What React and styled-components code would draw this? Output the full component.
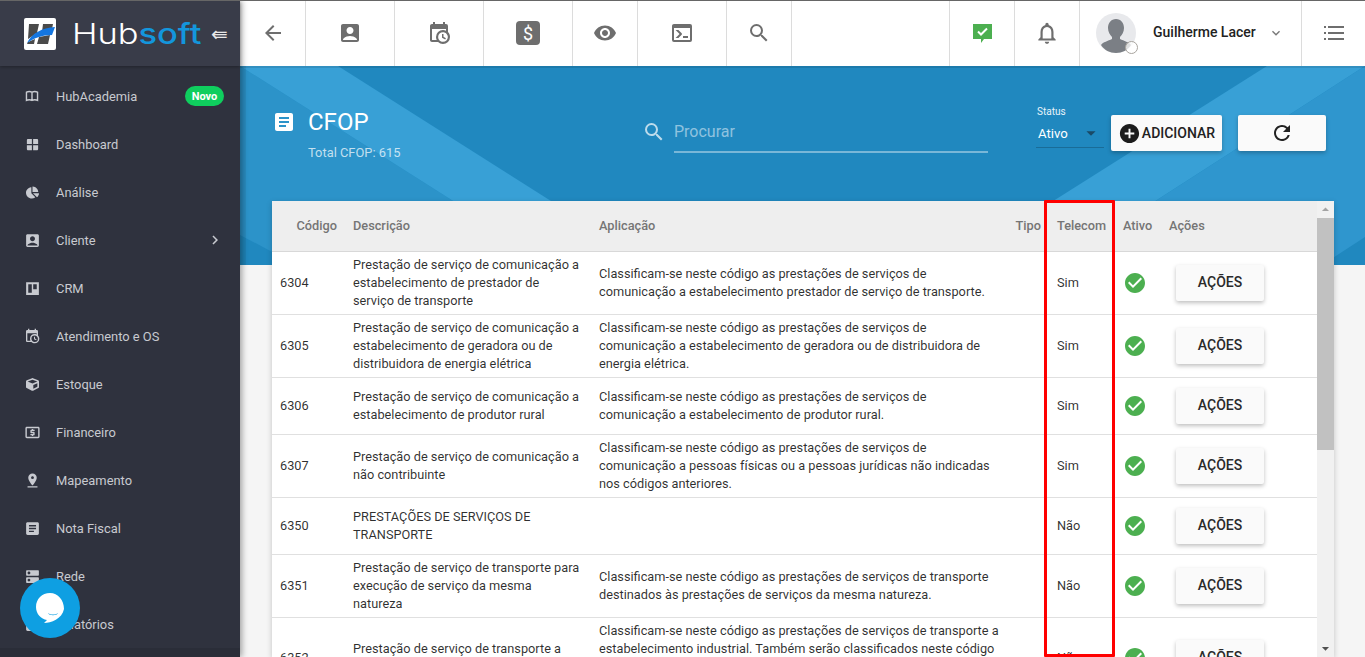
import React from 'react';
import styled, { createGlobalStyle } from 'styled-components';
import {
  MdWindow, MdAccountBox, MdLocalAtm, MdPinDrop, MdArticle, MdDns, MdAssessment,
  MdArrowBack, MdVisibility, MdSearch, MdNotificationsNone, MdExpandMore, MdChevronRight, MdCheckCircle,
  MdAddCircle, MdRefresh, MdArrowDropDown, MdArrowDropUp,
} from 'react-icons/md';
import { FaChartPie, FaCube } from 'react-icons/fa';

const Global = createGlobalStyle`
  html, body { margin: 0; height: 100%; overflow: hidden; }
  body { font-family: Roboto, "Liberation Sans", sans-serif; background: #f5f5f5; }
  * { box-sizing: border-box; }
`;

const Shell = styled.div`
  display: flex; width: 1365px; height: 657px; overflow: hidden; position: relative;
  border-top: 1px solid #666;
`;
const Sidebar = styled.aside`
  width: 240px; flex: none; height: 656px; background: #2f323e; display: flex; flex-direction: column;
  box-shadow: 2px 0 6px rgba(0,0,0,.35); z-index: 3; position: relative;
`;
const Brand = styled.div`
  height: 65px; flex: none; display: flex; align-items: center; padding-left: 24px;
  background: #393c49; box-shadow: 0 1px 3px rgba(0,0,0,.3);
`;
const LogoMark = styled.svg`width: 32px; height: 32px; flex: none;`;
const LogoText = styled.span`
  margin-left: 16px; font-family: Inter, sans-serif; font-size: 28px; font-weight: 300; color: #fff;
  line-height: 1; display: inline-block; width: 139px; white-space: nowrap;
  transform: scaleX(1.23); transform-origin: left center;
  & b { font-weight: 500; color: #1396dc; }
`;
const Collapse = styled.span`
  color: #e8e8e8; font-size: 20px; line-height: 1; font-family: "DejaVu Sans", sans-serif;
`;
const Nav = styled.nav`
  flex: 1; min-height: 0; padding-top: 6px; overflow: hidden;
`;
const SideFoot = styled.div`height: 9px; flex: none; background: #2a2d38;`;
const NavItem = styled.div`
  height: 48px; display: flex; align-items: center; padding: 0 16px 0 23px; color: #c8cad0; font-size: 12.9px;
  & > span { flex: 1; white-space: nowrap; }
`;
const NavGlyph = styled.i`
  width: 18px; height: 18px; flex: none; margin-right: 15px; display: flex; align-items: center; justify-content: center;
  color: #c8cad0;
  & svg { width: ${p => p.$s}px; height: ${p => p.$s}px; }
`;
const Badge = styled.em`
  font-style: normal; font-weight: 700; font-size: 11px; color: #fff; background: #0fce5e; border-radius: 10px;
  width: 39px; height: 20px; display: flex; align-items: center; justify-content: center;
`;
const Chat = styled.div`
  position: absolute; left: 20px; top: 577px; width: 60px; height: 60px; border-radius: 50%;
  background: #0e9fe2; z-index: 5; display: flex; align-items: center; justify-content: center;
`;
const Main = styled.main`
  flex: 1; min-width: 0; display: flex; flex-direction: column; position: relative;
`;
const Topbar = styled.header`
  height: 65px; flex: none; background: #fff; display: flex; align-items: stretch; color: #707070;
`;
const TopCell = styled.div`
  width: ${p => p.$w}px; flex: none; display: flex; align-items: center; justify-content: center; padding-bottom: 1px;
  border-right: ${p => p.$last ? '0' : '1px solid #dcdcdc'};
  & > svg { color: #6e6e6e; }
`;
const Spacer = styled.div`flex: 1; border-right: 1px solid #dcdcdc;`;
const UserCell = styled.div`
  width: 222px; flex: none; display: flex; align-items: center; padding: 0 0 1px 16px; border-right: 1px solid #dcdcdc;
`;
const Avatar = styled.div`position: relative; width: 40px; height: 40px; flex: none;`;
const Presence = styled.i`
  position: absolute; right: -2px; bottom: -1px; width: 13px; height: 13px; border-radius: 50%;
  border: 1.5px solid #a8a49e; background: rgba(255,255,255,.75);
`;
const UserName = styled.span`margin: 0 0 3px 17px; font-size: 14px; font-weight: 500; color: #222; white-space: nowrap;`;
const Caret = styled(MdExpandMore)`margin-left: 12px; color: #777; width: 16px; height: 16px;`;

const Banner = styled.section`
  height: 199px; flex: none; position: relative; background: #2088bf; overflow: hidden; color: #fff;
  display: grid; grid-template-columns: 370px 343px 48px 68px 7px 111px 16px 88px; padding-left: 35px;
  align-content: start;
  & > *:not(svg) { position: relative; z-index: 1; }
`;
const BannerArt = styled.svg`position: absolute; left: 0; top: 0; width: 1125px; height: 199px;`;
const TitleBlock = styled.div`
  padding-top: 40px; display: grid; grid-template-columns: 33px 1fr; align-items: center;
  & > svg { width: 24px; height: 24px; margin-left: -3px; }
`;
const Title = styled.h1`margin: 0; font-size: 24px; font-weight: 400; line-height: 32px;`;
const Total = styled.div`grid-column: 2; font-size: 12.9px; color: rgba(255,255,255,.72); margin-top: 7px; line-height: 16px;`;
const Search = styled.div`
  padding-top: 49px; display: flex; align-items: flex-start;
  & > svg { width: 24px; height: 24px; color: rgba(255,255,255,.7); margin: 5px 8px 0 -3px; flex: none; }
`;
const SearchField = styled.div`
  flex: 1; height: 38px; line-height: 34px; font-size: 16px; color: rgba(255,255,255,.5);
  border-bottom: 2px solid rgba(255,255,255,.4);
`;
const Status = styled.div`padding-top: 40px; grid-column: 4;`;
const StatusLabel = styled.div`font-size: 10px; line-height: 12px; color: #e8f3fa; padding-left: 1px;`;
const StatusValue = styled.div`
  margin-top: 3px; height: 27px; display: flex; align-items: center; justify-content: space-between; font-size: 13.2px;
  padding: 0 0 2px 2px; border-bottom: 1px solid rgba(0,0,0,.2);
  & svg { color: #1a4a66; width: 22px; height: 22px; margin-right: 2px; }
`;
const Action = styled.button`
  grid-column: ${p => p.$col}; margin-top: 49px; height: 36px; background: #fafafa; border: 0; border-radius: 2px; padding: 0;
  display: flex; align-items: center; justify-content: center; gap: 1px; font: 500 14px Roboto, sans-serif; color: #222;
  box-shadow: 0 2px 4px rgba(0,0,0,.25);
`;
const Card = styled.section`
  margin: -64px 31px 0 32px; flex: 1; min-height: 0; background: #fff; position: relative; z-index: 2; display: flex;
  box-shadow: 0 2px 6px rgba(0,0,0,.2);
`;
const TableWrap = styled.div`flex: 1; min-width: 0; overflow: hidden;`;
const Table = styled.table`
  border-collapse: collapse; table-layout: fixed; width: 1045px; font-size: 12.75px; color: rgba(0,0,0,.82);
`;
const Th = styled.th`
  height: 50px; background: #eee; color: #757575; font-size: 12.75px; font-weight: 500; padding: 0 8px;
  text-align: ${p => p.$right ? 'right' : 'left'}; border-bottom: 1px solid #d8d8d8; white-space: nowrap; overflow: visible;
`;
const Tr = styled.tr`border-bottom: 1px solid #e0e0e0;`;
const Td = styled.td`padding: 4px 8px; line-height: 18px; vertical-align: middle;`;
const TextTd = styled(Td)`padding-right: ${p => p.$pr}px;`;
const ActiveIcon = styled(MdCheckCircle)`display: block; width: 24px; height: 24px; color: #4caf50;`;
const RowButton = styled.button`
  display: block; margin: 6px 0 6px 7px; width: 88px; height: 36px; border: 0; border-radius: 2px; background: #fafafa;
  font: 500 14px Roboto, sans-serif; color: #2a2a2a; box-shadow: 0 2px 4px rgba(0,0,0,.25); padding: 0 0 2px;
`;
const Scroll = styled.div`
  width: 17px; flex: none; background: #f1f1f1; display: flex; flex-direction: column; align-items: center;
  & > svg { width: 17px; height: 17px; flex: none; }
`;
const UpArrow = styled(MdArrowDropUp)`color: #a3a3a3;`;
const DownArrow = styled(MdArrowDropDown)`color: #505050;`;
const Thumb = styled.div`width: 100%; height: 232px; background: #c1c1c1; flex: none;`;
const ScrollFill = styled.div`flex: 1;`;
const Highlight = styled.div`
  position: absolute; left: 772px; top: -1px; width: 71px; height: 457px; border: 3px solid #f00; border-radius: 1px; pointer-events: none;
`;

const CalendarClock = (p) => (
  <svg viewBox="0 0 24 24" fill="currentColor" {...p}><path d="M15,13H16.5V15.82L18.94,17.23L18.19,18.53L15,16.69V13M19,8H5V19H9.67C9.24,18.09 9,17.07 9,16A7,7 0 0,1 16,9C17.07,9 18.09,9.24 19,9.67V8M5,21C3.89,21 3,20.1 3,19V5C3,3.89 3.89,3 5,3H6V1H8V3H16V1H18V3H19A2,2 0 0,1 21,5V11.1C22.24,12.36 23,14.09 23,16A7,7 0 0,1 16,23C14.09,23 12.36,22.24 11.1,21H5M16,11.15A4.85,4.85 0 0,0 11.15,16C11.15,18.68 13.32,20.85 16,20.85A4.85,4.85 0 0,0 20.85,16C20.85,13.32 18.68,11.15 16,11.15Z"/></svg>
);
const Console = (p) => (
  <svg viewBox="0 0 24 24" fill="currentColor" {...p}><path d="M20,19V7H4V19H20M20,3A2,2 0 0,1 22,5V19A2,2 0 0,1 20,21H4A2,2 0 0,1 2,19V5C2,3.89 2.9,3 4,3H20M13,17V15H18V17H13M9.58,13L5.57,9H8.4L11.7,12.3C12.09,12.69 12.09,13.33 11.7,13.72L8.42,17H5.59L9.58,13Z"/></svg>
);
const Quilt = (p) => (
  <svg viewBox="0 0 24 24" fill="currentColor" {...p}><path fillRule="evenodd" d="M3 3h18v18H3zM6 6v12h5V6zm7 0v7h5V6z"/></svg>
);
const OpenBook = (p) => (
  <svg viewBox="0 0 24 24" fill="none" stroke="currentColor" strokeWidth="2.4" {...p}><path d="M2.5 5.5c3-1.4 6.6-1.4 9.5 0 2.9-1.4 6.5-1.4 9.5 0v14c-3-1.4-6.6-1.4-9.5 0-2.9-1.4-6.5-1.4-9.5 0zM12 5.5v14"/></svg>
);
const Dollar = () => (
  <svg width="24" height="24" viewBox="0 0 24 24"><rect width="24" height="24" rx="4" fill="#6e6e6e"/><text x="12" y="18.5" fontSize="18" textAnchor="middle" fill="#fff" fontFamily="Roboto">$</text></svg>
);
const ChatCheck = () => (
  <svg width="21" height="21" viewBox="0 0 21 21"><path d="M1 1h19v15h-8l-3 4v-4H1z" fill="#4caf50"/><path d="M6 8.5l3 3 6-6" stroke="#fff" strokeWidth="2" fill="none"/></svg>
);
const ListIcon = () => (
  <svg width="20" height="16" viewBox="0 0 20 16" fill="#6e6e6e"><rect x="0" y="1" width="2" height="2"/><rect x="4" y="1" width="16" height="2"/><rect x="0" y="7" width="2" height="2"/><rect x="4" y="7" width="16" height="2"/><rect x="0" y="13" width="2" height="2"/><rect x="4" y="13" width="16" height="2"/></svg>
);

const navItems = [
  [OpenBook, 'HubAcademia', 14, 'badge'],
  [MdWindow, 'Dashboard', 15],
  [FaChartPie, 'Análise', 13],
  [MdAccountBox, 'Cliente', 17, 'arrow'],
  [Quilt, 'CRM', 17],
  [CalendarClock, 'Atendimento e OS', 16],
  [FaCube, 'Estoque', 13],
  [MdLocalAtm, 'Financeiro', 17],
  [MdPinDrop, 'Mapeamento', 17],
  [MdArticle, 'Nota Fiscal', 17],
  [MdDns, 'Rede', 17],
  [MdAssessment, 'Relatórios', 17],
];

const rows = [
  ['6304', 'Prestação de serviço de comunicação a estabelecimento de prestador de serviço de transporte', 'Classificam-se neste código as prestações de serviços de comunicação a estabelecimento prestador de serviço de transporte.', 'Sim'],
  ['6305', 'Prestação de serviço de comunicação a estabelecimento de geradora ou de distribuidora de energia elétrica', 'Classificam-se neste código as prestações de serviços de comunicação a estabelecimento de geradora ou de distribuidora de energia elétrica.', 'Sim'],
  ['6306', 'Prestação de serviço de comunicação a estabelecimento de produtor rural', 'Classificam-se neste código as prestações de serviços de comunicação a estabelecimento de produtor rural.', 'Sim'],
  ['6307', 'Prestação de serviço de comunicação a não contribuinte', 'Classificam-se neste código as prestações de serviços de comunicação a pessoas físicas ou a pessoas jurídicas não indicadas nos códigos anteriores.', 'Sim'],
  ['6350', 'PRESTAÇÕES DE SERVIÇOS DE TRANSPORTE', '', 'Não'],
  ['6351', 'Prestação de serviço de transporte para execução de serviço da mesma natureza', 'Classificam-se neste código as prestações de serviços de transporte destinados às prestações de serviços da mesma natureza.', 'Não'],
  ['6352', 'Prestação de serviço de transporte a estabelecimento industrial', 'Classificam-se neste código as prestações de serviços de transporte a estabelecimento industrial. Também serão classificados neste código os serviços de transporte prestados a estabelecimento de empresa do mesmo grupo.', 'Não'],
];

export default function App() {
  return (
    <Shell>
      <Global />
      <Sidebar>
        <Brand>
          <LogoMark viewBox="0 0 32 32">
            <rect width="32" height="32" rx="2" fill="#fff"/>
            <path d="M5 6h10l-2 9-9 6zM19 6h10l-1 5-10 3zM15 19l11-2-2 9H13zM4 24l7-3-1 5H3z" fill="#4a4a4a"/>
            <path d="M3 25C8 15 18 10 31 9l-3 8C18 17 10 20 3 25z" fill="#1476e0"/>
          </LogoMark>
          <LogoText>Hub<b>soft</b></LogoText>
          <Collapse>⇚</Collapse>
        </Brand>
        <Nav>
          {navItems.map(([Icon, label, size, extra]) => (
            <NavItem key={label}>
              <NavGlyph $s={size}><Icon /></NavGlyph>
              <span>{label}</span>
              {extra === 'badge' && <Badge>Novo</Badge>}
              {extra === 'arrow' && <MdChevronRight size={18} />}
            </NavItem>
          ))}
        </Nav>
        <SideFoot />
      </Sidebar>
      <Chat>
        <svg width="30" height="32" viewBox="0 0 30 32"><path d="M15 1C7 1 1 7 1 15c0 7 5 12 11 13l-3 3c7 0 18-4 20-14 0-9-6-16-14-16z" fill="#fff"/><path d="M13 21c3 2 7 2 10 0-1 3-9 3-10 0z" fill="#0e9fe2"/></svg>
      </Chat>
      <Main>
        <Topbar>
          <TopCell $w={66}><MdArrowBack size={24} /></TopCell>
          <TopCell $w={89}><MdAccountBox size={24} /></TopCell>
          <TopCell $w={89}><CalendarClock width="24" height="24" /></TopCell>
          <TopCell $w={89}><Dollar /></TopCell>
          <TopCell $w={65}><MdVisibility size={24} /></TopCell>
          <TopCell $w={89}><Console width="24" height="24" /></TopCell>
          <TopCell $w={65}><MdSearch size={24} /></TopCell>
          <Spacer />
          <TopCell $w={65}><ChatCheck /></TopCell>
          <TopCell $w={65}><MdNotificationsNone size={26} /></TopCell>
          <UserCell>
            <Avatar>
              <svg width="40" height="40" viewBox="0 0 40 40"><circle cx="20" cy="20" r="20" fill="#e8e9ec"/><path d="M20 6c5 0 8 4 8 9 0 4-2 7-4 9v2c4 2 9 3 11 6-3 5-9 8-15 8S8 37 5 32c2-3 7-4 11-6v-2c-2-2-4-5-4-9 0-5 3-9 8-9z" fill="#7b7f85"/></svg>
              <Presence />
            </Avatar>
            <UserName>Guilherme Lacer</UserName>
            <Caret />
          </UserCell>
          <TopCell $w={63} $last><ListIcon /></TopCell>
        </Topbar>
        <Banner>
          <BannerArt viewBox="0 0 1125 199">
            <polygon points="0,0 314,199 57,199 0,169" fill="#2c93c9"/>
            <polygon points="0,0 98,0 412,199 314,199" fill="#38a0d6"/>
            <polygon points="1027,0 1125,0 816,199 712,199" fill="#38a0d6"/>
            <polygon points="1125,0 1125,171 1082,199 816,199" fill="#2f96ce"/>
            <rect x="0" y="0" width="1125" height="2" fill="#000" opacity=".1"/>
            <rect x="0" y="0" width="6" height="199" fill="#000" opacity=".06"/>
          </BannerArt>
          <TitleBlock>
            <MdArticle />
            <Title>CFOP</Title>
            <Total>Total CFOP: 615</Total>
          </TitleBlock>
          <Search>
            <MdSearch />
            <SearchField>Procurar</SearchField>
          </Search>
          <Status>
            <StatusLabel>Status</StatusLabel>
            <StatusValue>Ativo<MdArrowDropDown /></StatusValue>
          </Status>
          <Action $col={6}><MdAddCircle size={23} color="#1c1c1c" />ADICIONAR</Action>
          <Action $col={8}><MdRefresh size={24} color="#222" /></Action>
        </Banner>
        <Card>
          <TableWrap>
            <Table>
              <colgroup>
                <col style={{ width: 73 }} /><col style={{ width: 246 }} /><col style={{ width: 416 }} /><col style={{ width: 42 }} /><col style={{ width: 66 }} /><col style={{ width: 46 }} /><col style={{ width: 156 }} />
              </colgroup>
              <thead>
                <tr>
                  <Th $right>Código</Th><Th>Descrição</Th><Th>Aplicação</Th><Th $right>Tipo</Th><Th>Telecom</Th><Th>Ativo</Th><Th>Ações</Th>
                </tr>
              </thead>
              <tbody>
                {rows.map(([code, desc, app, tel]) => (
                  <Tr key={code}>
                    <Td>{code}</Td><TextTd $pr={9}>{desc}</TextTd><TextTd $pr={7}>{app}</TextTd><Td />
                    <Td>{tel}</Td>
                    <Td><ActiveIcon /></Td>
                    <Td><RowButton>AÇÕES</RowButton></Td>
                  </Tr>
                ))}
              </tbody>
            </Table>
          </TableWrap>
          <Scroll>
            <UpArrow />
            <Thumb />
            <ScrollFill />
            <DownArrow />
          </Scroll>
          <Highlight />
        </Card>
      </Main>
    </Shell>
  );
}
